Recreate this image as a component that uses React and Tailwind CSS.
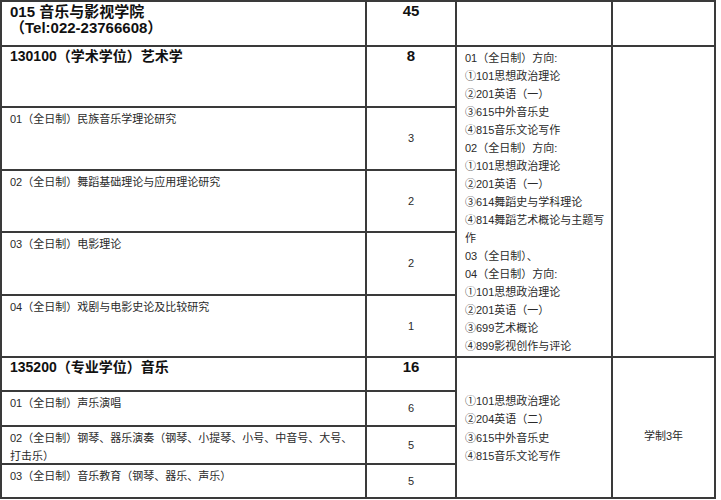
import React from 'react';

const font = { fontFamily: '"Liberation Sans", "Noto Sans CJK SC", sans-serif' };

const rowsA = [
  { name: '01（全日制）民族音乐学理论研究', n: 3 },
  { name: '02（全日制）舞蹈基础理论与应用理论研究', n: 2 },
  { name: '03（全日制）电影理论', n: 2 },
  { name: '04（全日制）戏剧与电影史论及比较研究', n: 1 },
];

const rowsB = [
  { name: '01（全日制）声乐演唱', n: 6 },
  { name: '02（全日制）钢琴、器乐演奏（钢琴、小提琴、小号、中音号、大号、打击乐）', n: 5 },
  { name: '03（全日制）音乐教育（钢琴、器乐、声乐）', n: 5 },
];

const examsA = [
  '01（全日制）方向:',
  '①101思想政治理论',
  '②201英语（一）',
  '③615中外音乐史',
  '④815音乐文论写作',
  '02（全日制）方向:',
  '①101思想政治理论',
  '②201英语（一）',
  '③614舞蹈史与学科理论',
  '④814舞蹈艺术概论与主题写作',
  '03（全日制）、',
  '04（全日制）方向:',
  '①101思想政治理论',
  '②201英语（一）',
  '③699艺术概论',
  '④899影视创作与评论',
];

const examsB = ['①101思想政治理论', '②204英语（二）', '③615中外音乐史', '④815音乐文论写作'];

function SubRows({ rows }) {
  return rows.map((r, i) => (
    <React.Fragment key={i}>
      <div className="bg-white pl-[8px] pr-[4px] pt-[2px] text-[11px] leading-[18px] text-[#2a2a2a]">{r.name}</div>
      <div className="bg-white flex items-center justify-center text-[11px] text-[#2a2a2a]">{r.n}</div>
    </React.Fragment>
  ));
}

export default function App() {
  return (
    <div className="min-h-screen bg-white" style={font}>
      <div className="grid w-[716px] grid-cols-[363px_88px_154px_101px] grid-rows-[43px_59px_61px_60px_61px_60px_32px_33px_36px_32px] gap-[2px] bg-[#3a3a3a] p-[2px]">
        {/* college */}
        <div className="bg-white pl-[8px] pt-[2px] text-[15px] font-bold leading-[16px] text-[#111]">
          <div>015 音乐与影视学院</div>
          <div>（Tel:022-23766608）</div>
        </div>
        <div className="bg-white text-center text-[15px] font-bold leading-[18px] text-[#111]">45</div>
        <div className="bg-white" />
        <div className="bg-white" />

        {/* 130100 */}
        <div className="bg-white pl-[8px] text-[14px] font-bold leading-[18px] text-[#111]">130100（学术学位）艺术学</div>
        <div className="bg-white text-center text-[15px] font-bold leading-[18px] text-[#111]">8</div>
        <div className="row-span-5 flex flex-col justify-center bg-white pl-[8px] pr-[2px] text-[11px] leading-[18px] text-[#2a2a2a]">
          {examsA.map((t, i) => (
            <div key={i}>{t}</div>
          ))}
        </div>
        <div className="row-span-5 bg-white" />
        <SubRows rows={rowsA} />

        {/* 135200 */}
        <div className="bg-white pl-[8px] text-[14px] font-bold leading-[18px] text-[#111]">135200（专业学位）音乐</div>
        <div className="bg-white text-center text-[15px] font-bold leading-[18px] text-[#111]">16</div>
        <div className="row-span-4 flex flex-col justify-center bg-white pl-[8px] pt-[2px] text-[11px] leading-[18.3px] text-[#2a2a2a]">
          {examsB.map((t, i) => (
            <div key={i}>{t}</div>
          ))}
        </div>
        <div className="row-span-4 flex items-center justify-center bg-white pt-[18px] text-[11px] text-[#2a2a2a]">学制3年</div>
        <SubRows rows={rowsB} />
      </div>
    </div>
  );
}
